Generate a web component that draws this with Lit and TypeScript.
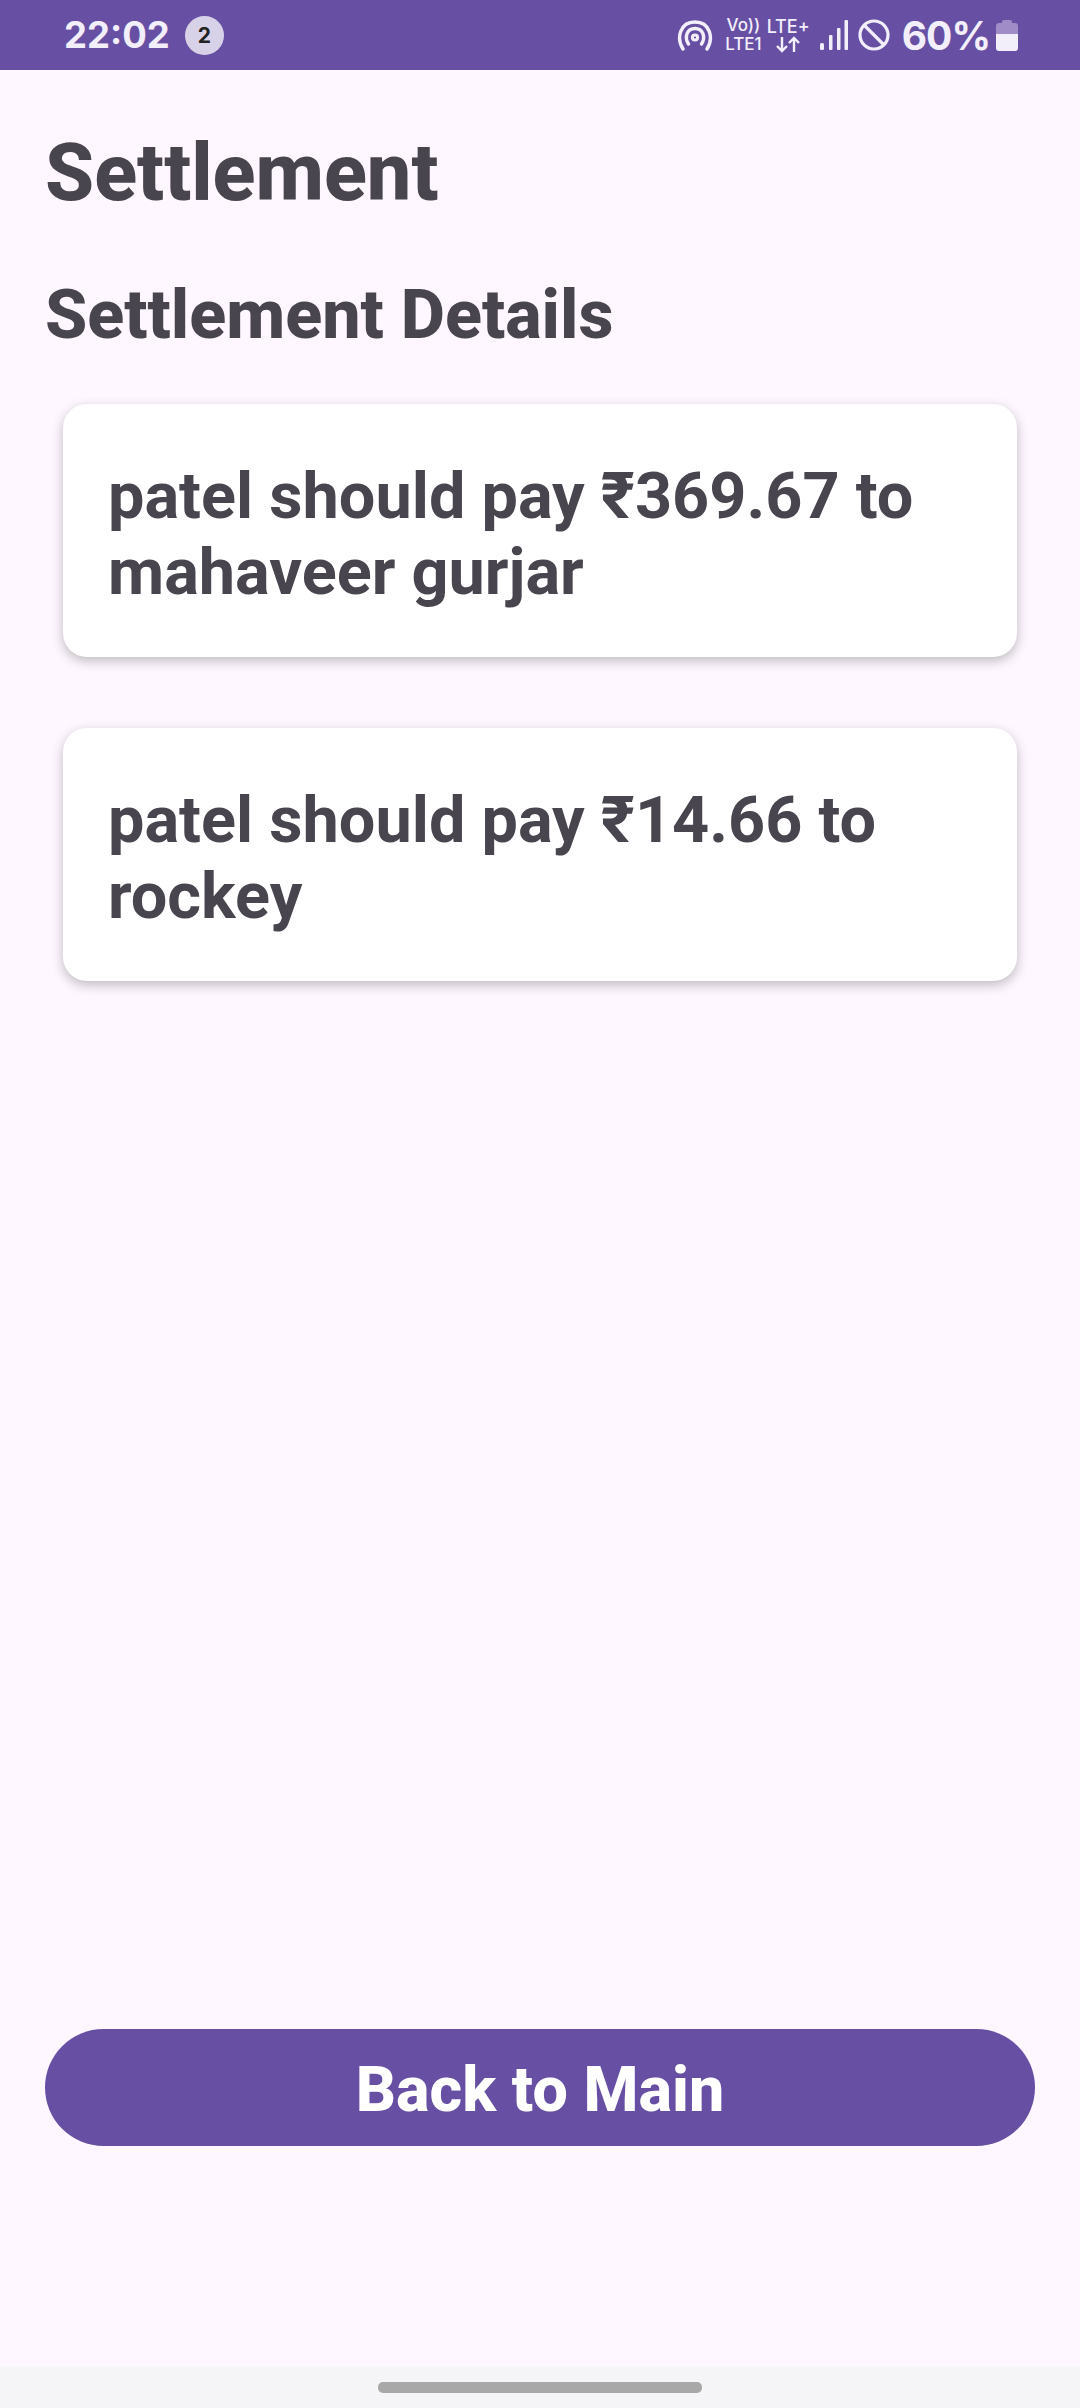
import { LitElement, html, css } from "lit";
import { customElement } from "lit/decorators.js";

@customElement("app-root")
export class AppRoot extends LitElement {
  static styles = css`
    :host { display: block; width: 1080px; height: 2408px; background: #fef7ff; font-family: Roboto, "Noto Sans", sans-serif; color: #49454f; }
    .page { display: flex; flex-direction: column; height: 2408px; }
    .status { height: 70px; flex: none; background: #6750a4; display: flex; align-items: center; padding: 0 62px 0 64px; color: #f3effa; font-family: Inter, Roboto, sans-serif; box-sizing: border-box; }
    .time { font-size: 36.5px; font-weight: 700; line-height: 70px; }
    .badge { width: 39px; height: 39px; border-radius: 50%; background: #d8d2e8; color: #222; font-size: 21px; font-weight: 700; display: flex; align-items: center; justify-content: center; margin-left: 15px; }
    .spacer { flex: 1; }
    .right { display: flex; align-items: center; }
    .stack { display: flex; flex-direction: column; align-items: center; font-size: 18px; font-weight: 500; line-height: 19px; }
    .stack.vo { margin-left: 12px; font-size: 17px; }
    .stack.lte { margin-left: 5px; }
    .pct { font-size: 39px; font-weight: 700; margin-left: 12px; letter-spacing: -1px; }
    .sig { margin-left: 10px; }
    .ban { margin-left: 10px; }
    .bat { margin-left: 6px; }
    .content { flex: 1; padding: 57px 45px 0; display: flex; flex-direction: column; min-height: 0; }
    h1 { margin: 0; font-size: 79.2px; line-height: 92px; font-weight: 800; }
    h2 { margin: 56px 0 0; font-size: 68.2px; line-height: 80px; font-weight: 800; }
    .cards { display: flex; flex-direction: column; gap: 71px; margin: 49px 18px 0; }
    .card { background: #fff; border-radius: 24px; padding: 54px 45px 0; height: 253px; box-sizing: border-box; font-size: 64.8px; line-height: 76px; font-weight: 700; box-shadow: 0 4px 12px rgba(0,0,0,0.25); }
    .grow { flex: 1; }
    .btn { height: 117px; border-radius: 59px; background: #6750a4; color: #fff; font-size: 62.8px; font-weight: 800; display: flex; align-items: center; justify-content: center; margin-bottom: 220px; padding-top: 3px; box-sizing: border-box; }
    .nav { height: 42px; flex: none; background: #f5f5f7; display: flex; justify-content: center; padding-top: 16px; box-sizing: border-box; }
    .pill { width: 324px; height: 11px; border-radius: 5px; background: #a8a8a8; }
  `;

  render() {
    return html`
      <div class="page">
        <div class="status">
          <span class="time">22:02</span>
          <span class="badge">2</span>
          <span class="spacer"></span>
          <div class="right">
            <svg width="36" height="32" viewBox="0 0 36 32" fill="none" stroke="#f3effa" stroke-width="3.4" stroke-linecap="round">
              <path d="M6 30 C-1 19 3 3 18 3 C33 3 37 19 30 30" />
              <path d="M11.500 25 C7 18 10 9.500 18 9.500 C26 9.500 29 18 24.500 25" />
              <circle cx="18" cy="18.500" r="2.600" fill="none" stroke-width="3" />
            </svg>
            <div class="stack vo"><span>Vo))</span><span>LTE1</span></div>
            <div class="stack lte">
              <span>LTE+</span>
              <svg width="26" height="17" viewBox="0 0 26 17" fill="none" stroke="#f3effa" stroke-width="2.400">
                <path d="M7 1 V15 M2 10 L7 15 L12 10" />
                <path d="M19 16 V2 M14 7 L19 2 L24 7" />
              </svg>
            </div>
            <svg class="sig" width="28" height="30" viewBox="0 0 28 30" fill="#f3effa">
              <rect x="0" y="23" width="4" height="7" rx="1.500" />
              <rect x="9" y="15" width="3.500" height="15" rx="1" />
              <rect x="17" y="8" width="3.500" height="22" rx="1" />
              <rect x="24.500" y="0" width="3.500" height="30" rx="1" />
            </svg>
            <svg class="ban" width="32" height="32" viewBox="0 0 32 32" fill="none" stroke="#f3effa" stroke-width="3.200">
              <circle cx="16" cy="16" r="14" />
              <path d="M6 6 L26 26" />
            </svg>
            <span class="pct">60%</span>
            <svg class="bat" width="22" height="32" viewBox="0 0 22 32">
              <path d="M6 3 Q6 1 8 1 H14 Q16 1 16 3 V4 H19 Q22 4 22 7 V15 H0 V7 Q0 4 3 4 H6 Z" fill="#a08cc6" />
              <path d="M0 15 H22 V29 Q22 32 19 32 H3 Q0 32 0 29 Z" fill="#f3effa" />
            </svg>
          </div>
        </div>
        <div class="content">
          <h1>Settlement</h1>
          <h2>Settlement Details</h2>
          <div class="cards">
            <div class="card">patel should pay ₹369.67 to mahaveer gurjar</div>
            <div class="card">patel should pay ₹14.66 to rockey</div>
          </div>
          <div class="grow"></div>
          <div class="btn">Back to Main</div>
        </div>
        <div class="nav"><div class="pill"></div></div>
      </div>
    `;
  }
}
